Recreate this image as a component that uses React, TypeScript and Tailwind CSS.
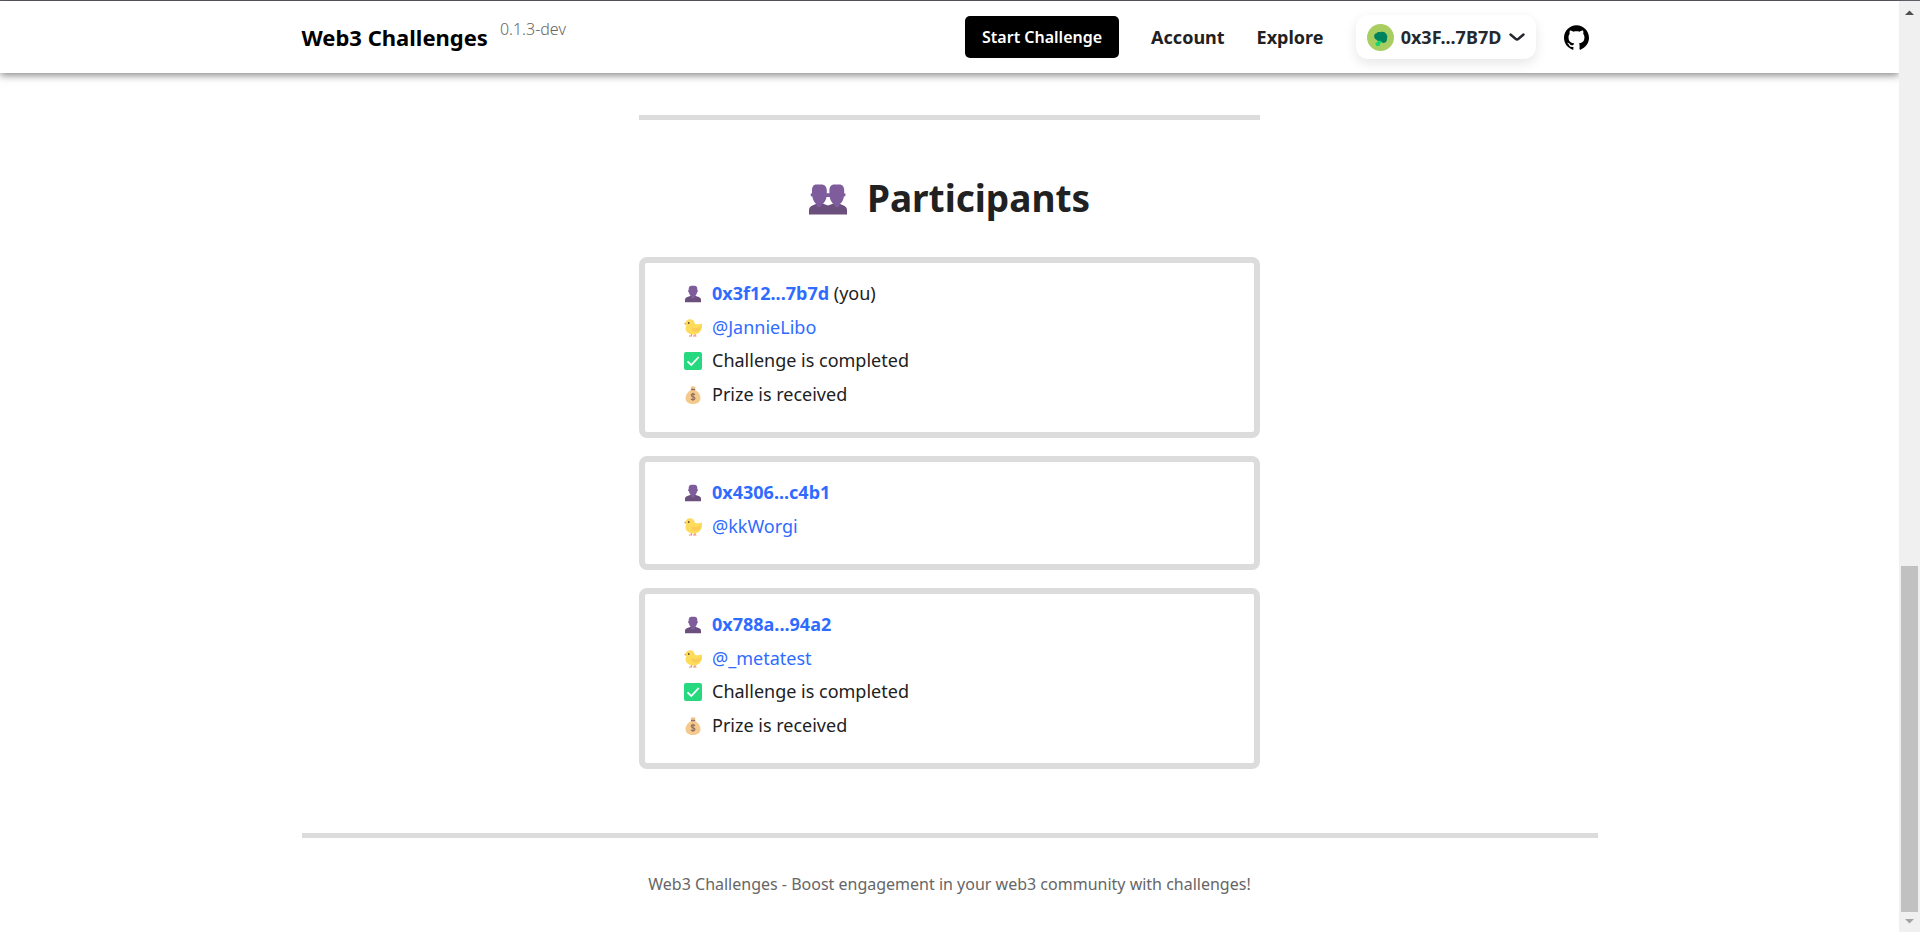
import type { ReactNode } from "react"
import { SiGithub } from "react-icons/si"

type Participant = {
  address: string
  twitter: string
  isYou?: boolean
  completed?: boolean
}

const participants: Participant[] = [
  { address: "0x3f12...7b7d", twitter: "@JannieLibo", isYou: true, completed: true },
  { address: "0x4306...c4b1", twitter: "@kkWorgi" },
  { address: "0x788a...94a2", twitter: "@_metatest", completed: true },
]

function PersonIcon() {
  return (
    <svg viewBox="0 0 18 18" className="size-[18px]" aria-hidden="true">
      <path d="M1 17.2v-2.4c0-1.500 1-2.200 2.300-2.700L7 10.800h4l3.700 1.300c1.300.5 2.300 1.200 2.300 2.700v2.400z" fill="#6b4f7c" />
      <path d="M7 10h4v2.600c-1 1.300-3 1.300-4 0z" fill="#7f5d9c" />
      <path d="M4.700 3.800C4.700 1.800 6 .7 7.300.7h3.400c1.300 0 2.600 1.100 2.600 3.100v1.400c.6.1.7.5.6 1-.1.600-.3.900-.8 1-.4 2.600-1.900 4.600-4.100 4.600S5.300 9.800 4.900 7.200c-.5-.1-.7-.4-.8-1-.1-.5 0-.9.600-1z" fill="#7f5d9c" />
    </svg>
  )
}

function PeopleIcon() {
  return (
    <svg viewBox="0 0 38 31" className="h-[31px] w-[38px]" aria-hidden="true">
      <path d="M0 30.500V26c0-2.500 1.800-3.900 4-4.800l4-1.700h5.500l5.500 2 5.500-2H30l4 1.700c2.200.9 4 2.300 4 4.800v4.500z" fill="#6b4f7c" />
      <path d="M7.500 18h5v4c-1.300 1.700-3.700 1.700-5 0zM25.500 18h5v4c-1.300 1.700-3.700 1.700-5 0z" fill="#7f5d9c" />
      <path d="M3 6.500C3 2.500 4.800.5 7.200.5h5.600C15.200.5 17.800 2.500 17.800 6.500v2.700h2.600V6.500c0-4 2.200-6 4.600-6h5.600c2.400 0 4.600 2 4.600 6v2.700c1.200.2 1.500.8 1.300 1.700-.2 1-.7 1.600-1.600 1.700-.7 4.700-3.300 8.300-7 8.300s-6.300-3.400-7.200-8h-3.200c-.9 4.600-3.500 8-7.200 8s-6.200-3.600-6.900-8.300c-1-.1-1.500-.7-1.700-1.700-.2-.9.100-1.500 1.300-1.700z" fill="#7f5d9c" />
    </svg>
  )
}

function ChickIcon() {
  return (
    <svg viewBox="0 0 18 18" className="size-[18px]" aria-hidden="true">
      <path d="M7.500 14.500v2M11 14.500v2M5 17h3M9 17h3.500" stroke="#f28b6b" strokeWidth="1.200" fill="none" />
      <path d="M0 4.600 2.500 3.300v2.900z" fill="#e8935a" />
      <path d="M1.500 4.600C1.500 2 3.300.2 6 .2c2.800 0 4.700 2 4.900 4.600 2 .9 4.600.6 6.900-.3.700 2.600.3 5.600-1.400 7.700-1.600 2.100-4.200 3.200-7.200 3.200-4.400 0-7.700-2.600-7.700-6.100 0-1.200.4-2.100.9-2.800-.6-.5-.9-1.100-.9-1.900z" fill="#fddc5c" />
      <path d="M7.300 8.500c2.900.9 6.400.4 9.300-1.100.1 3.300-1.900 5.400-4.900 5.400-2.600 0-4.400-1.600-4.400-4.300z" fill="#fbcb55" />
      <circle cx="4.700" cy="4" r=".9" fill="#5c4a42" />
    </svg>
  )
}

function CheckIcon() {
  return (
    <svg viewBox="0 0 18 18" className="size-[18px]" aria-hidden="true">
      <rect width="18" height="18" rx="2" fill="#26d97f" />
      <path d="m3.500 9.300 3.800 3.700 7.400-8" stroke="#fff" strokeWidth="1.800" fill="none" />
    </svg>
  )
}

function MoneyBagIcon() {
  return (
    <svg viewBox="0 0 18 18" className="size-[18px]" aria-hidden="true">
      <path d="M6.500.9 9 .1l2.700.9-.8 2.300H7.300z" fill="#f5c98c" />
      <path d="M7.200 3.700h3.700c3.500 2 5.600 5 5.600 8.300 0 3.700-2.800 6-7.500 6s-7.500-2.300-7.500-6c0-3.300 2.200-6.300 5.700-8.300z" fill="#f5c98c" />
      <rect x="6.800" y="2.700" width="4.500" height="1.500" rx=".7" fill="#8d6e63" />
      <path d="M10.900 8.900c-.4-.7-1-1-1.900-1-1 0-1.800.5-1.800 1.400 0 2 3.800 1 3.800 3 0 1-.9 1.500-2 1.500-1 0-1.700-.4-2-1.100M9 6.700v8.300" stroke="#8d6e63" strokeWidth="1.100" fill="none" />
    </svg>
  )
}

function BroccoliAvatar() {
  return (
    <svg viewBox="0 0 27 27" className="size-[27px]" aria-hidden="true">
      <circle cx="13.500" cy="13.500" r="13.500" fill="#a8ce62" />
      <path d="m10.500 15 5.500 1.500-2.200 1.900-1 3.300-3.300.3-1.300-2.600 2.500-1.700z" fill="#12d66d" />
      <path d="M7.300 11.500c.1-1.400 1-2 2.200-2.300.8-1.200 2.300-1.500 3.700-1 2.300-.8 4.900-.2 6 1.800 1.300 1.300 1.300 3 .8 4.500.2 2.600-1.200 4.300-2.900 4.200-1.300.7-2.700-.7-3.700-2.200-1.400.7-3.400.4-4.300-1-1.600-.7-2.300-2.400-1.800-4z" fill="#00825f" />
    </svg>
  )
}

function Row({ icon, children }: { icon: ReactNode; children: ReactNode }) {
  return (
    <li className="flex items-center gap-2.5">
      {icon}
      <span>{children}</span>
    </li>
  )
}

function ParticipantCard({ participant }: { participant: Participant }) {
  return (
    <article className="rounded-lg border-6 border-[#dcdcdc] pt-3.5 pb-[21px] pl-[39px] text-lg leading-[33px]">
      <ul className="flex flex-col gap-px">
        <Row icon={<PersonIcon />}>
          <a href="#" className="font-bold text-[#2f6bff]">{participant.address}</a>
          {participant.isYou && " (you)"}
        </Row>
        <Row icon={<ChickIcon />}>
          <a href="#" className="text-[#2f6bff]">{participant.twitter}</a>
        </Row>
      </ul>
      {participant.completed && (
        <ul className="flex flex-col gap-px">
          <Row icon={<CheckIcon />}>Challenge is completed</Row>
          <Row icon={<MoneyBagIcon />}>Prize is received</Row>
        </ul>
      )}
    </article>
  )
}

function Header() {
  return (
    <header className="h-[72px] bg-white shadow-[0_2px_8px_rgba(0,0,0,0.5)]">
      <div className="mx-auto flex h-full max-w-[1296px] items-center justify-between pr-[9px]">
        <div className="flex items-center gap-3">
          <a href="#" className="text-[22px] font-bold text-black">Web3 Challenges</a>
          <span className="pb-4 text-base font-light text-[#666]">0.1.3-dev</span>
        </div>
        <nav className="flex items-center gap-8 text-lg font-bold">
          <button className="h-[42px] w-[154px] rounded-[5px] bg-black text-base font-semibold text-white">
            Start Challenge
          </button>
          <a href="#">Account</a>
          <a href="#">Explore</a>
          <div className="flex items-center gap-7">
            <button className="flex h-11 w-[180px] items-center justify-between rounded-xl bg-white px-[11px] font-['Noto_Sans',sans-serif] text-[#25292e] shadow-[0_4px_12px_rgba(0,0,0,0.1)]">
              <BroccoliAvatar />
              <span>0x3F...7B7D</span>
              <svg viewBox="0 0 16 9" className="h-[9px] w-4" fill="none" aria-hidden="true">
                <path d="m1.500 1.500 5 4.300c1 .8 2 .8 3 0l5-4.300" stroke="currentColor" strokeWidth="2.500" strokeLinecap="round" />
              </svg>
            </button>
            <a href="#" aria-label="GitHub" className="text-black">
              <SiGithub className="size-[25px]" />
            </a>
          </div>
        </nav>
      </div>
    </header>
  )
}

function ScrollTrack() {
  return (
    <div className="flex w-[21px] shrink-0 flex-col bg-[#f0f0f0] px-0.5" aria-hidden="true">
      <svg viewBox="0 0 17 20" className="h-5 w-[17px]">
        <path d="M4 14 8.500 9.500 13 14z" fill="#505050" />
      </svg>
      <div className="flex-[545]" />
      <div className="flex-[346] bg-[#c1c1c1]" />
      <svg viewBox="0 0 17 20" className="h-5 w-[17px]">
        <path d="M4 7 8.500 11.500 13 7z" fill="#a3a3a3" />
      </svg>
    </div>
  )
}

export default function App() {
  return (
    <div className="flex min-h-screen border-t border-[#5f5f66] bg-white font-['Noto_Sans',sans-serif] text-[#212121]">
      <div className="min-w-0 flex-1">
        <Header />
        <main className="mx-auto max-w-[621px] pt-[42px]">
          <hr className="border-t-5 border-[#dcdcdc]" />
          <h2 className="mt-[50px] mb-8 flex items-center justify-center gap-5 text-[37px] leading-[55px] font-bold">
            <span className="pt-1">
              <PeopleIcon />
            </span>
            Participants
          </h2>
          <div className="flex flex-col gap-[18px]">
            {participants.map((p) => (
              <ParticipantCard key={p.address} participant={p} />
            ))}
          </div>
        </main>
        <footer className="mx-auto mt-16 max-w-[1296px] border-t-5 border-[#dcdcdc] pt-[34px] text-center text-base text-[#666]">
          Web3 Challenges - Boost engagement in your web3 community with challenges!
        </footer>
      </div>
      <ScrollTrack />
    </div>
  )
}
